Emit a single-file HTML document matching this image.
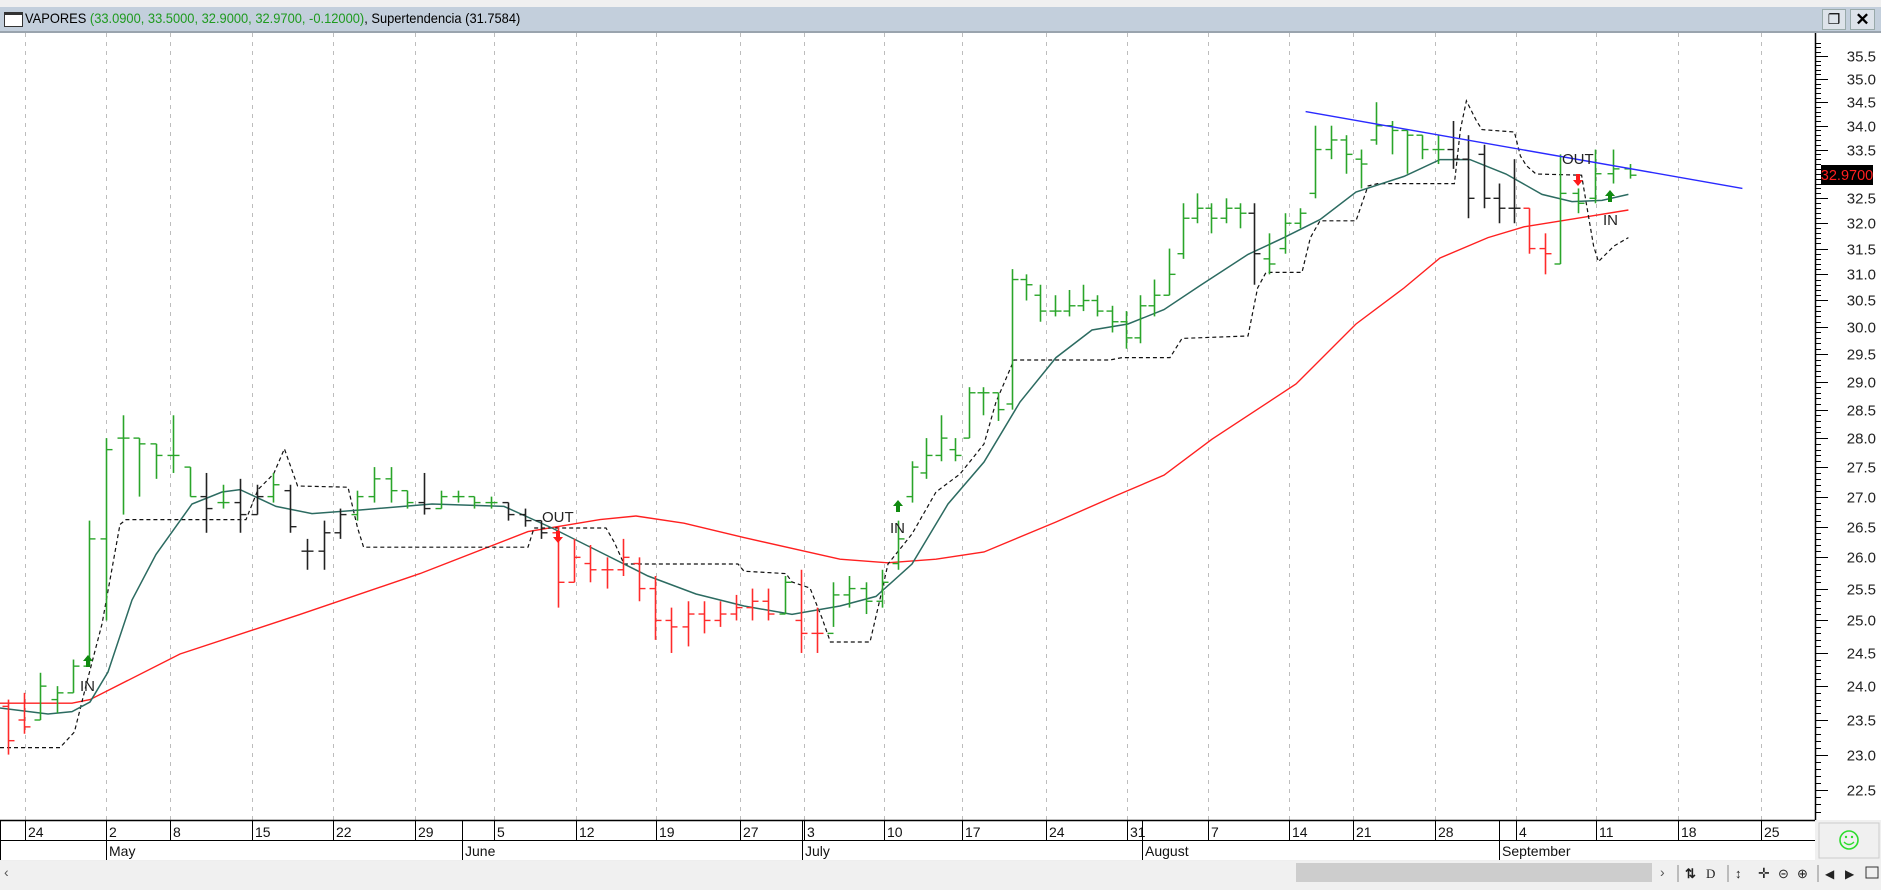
<!DOCTYPE html>
<html><head><meta charset="utf-8"><style>
body{margin:0;width:1881px;height:890px;overflow:hidden;background:#f0f0f0;font-family:"Liberation Sans",sans-serif;position:relative}
.abs{position:absolute}
</style></head><body>
<div class="abs" style="left:0;top:0;width:1881px;height:7px;background:#f0f0f0;border-bottom:1px solid #a0a0a0"></div>
<div class="abs" style="left:0;top:7px;width:1881px;height:26px;background:#c3cfdc;border-bottom:2px solid #9aa4ae;box-sizing:border-box"></div>
<div class="abs" style="left:4px;top:12px;width:19px;height:15px;border:1px solid #333;background:#fff;box-sizing:border-box;border-top:3px solid #333"></div>
<div class="abs" style="left:25px;top:10px;font-size:14px;white-space:nowrap;color:#000;transform:scaleX(0.92);transform-origin:left">VAPORES <span style="color:#1e9a1e">(33.0900, 33.5000, 32.9000, 32.9700, -0.12000)</span>, Supertendencia (31.7584)</div>
<div class="abs" style="left:1822px;top:9px;width:24px;height:21px;background:#dde3ea;border:1px solid #9aa;box-sizing:border-box;font-size:14px;text-align:center;line-height:19px">&#x2750;</div>
<div class="abs" style="left:1850px;top:9px;width:25px;height:21px;background:#dde3ea;border:1px solid #9aa;box-sizing:border-box;font-size:17px;font-weight:bold;text-align:center;line-height:19px">✕</div>
<svg class="abs" style="left:0;top:33px" width="1881" height="857" viewBox="0 33 1881 857" id="s"></svg>
<script>
const NS="http://www.w3.org/2000/svg";const s=document.getElementById('s');let h='';
function Y(p){return 790-1609*(Math.log(p)-3.1135);}
h+='<rect x="0" y="33" width="1881" height="787" fill="#fff"/>';
const ticks=[[25,'24'],[106,'2'],[170,'8'],[252,'15'],[333,'22'],[415,'29'],[494,'5'],[576,'12'],[656,'19'],[740,'27'],[804,'3'],[884,'10'],[962,'17'],[1046,'24'],[1127,'31'],[1208,'7'],[1289,'14'],[1353,'21'],[1435,'28'],[1516,'4'],[1596,'11'],[1678,'18'],[1761,'25']];
ticks.forEach(t=>{h+=`<line x1="${t[0]+.5}" y1="33" x2="${t[0]+.5}" y2="820" stroke="#bdbdbd" stroke-dasharray="4,5"/>`;});
// bars [hi,lo,open,close,c]
const D=[[23.8,23.0,23.7,23.2,'r'],[23.9,23.3,23.5,23.4,'r'],[24.2,23.5,23.5,24.0,'g'],[24.0,23.6,23.8,23.9,'g'],[24.4,23.9,23.9,24.3,'g'],[26.6,24.3,24.3,26.3,'g'],[28.0,25.0,26.3,27.8,'g'],[28.4,26.7,28.0,28.0,'g'],[28.0,27.0,28.0,27.9,'g'],[27.9,27.3,27.9,27.7,'g'],[28.4,27.4,27.7,27.7,'g'],[27.5,27.0,27.5,27.0,'g'],[27.4,26.4,27.0,26.8,'k'],[27.2,26.8,26.9,26.9,'g'],[27.3,26.4,26.9,26.7,'k'],[27.2,26.7,26.7,27.0,'k'],[27.4,26.9,27.0,27.2,'g'],[27.2,26.4,27.1,26.5,'k'],[26.3,25.8,26.1,26.1,'k'],[26.6,25.8,26.1,26.4,'k'],[26.8,26.3,26.4,26.7,'k'],[27.1,26.6,26.7,27.0,'g'],[27.5,26.9,27.0,27.3,'g'],[27.5,26.9,27.3,27.1,'g'],[27.1,26.8,27.1,26.9,'g'],[27.4,26.7,26.9,26.8,'k'],[27.1,26.8,26.8,27.0,'g'],[27.1,26.9,27.0,27.0,'g'],[27.0,26.8,27.0,26.9,'g'],[27.0,26.8,26.9,26.9,'g'],[26.9,26.6,26.9,26.7,'k'],[26.8,26.5,26.7,26.6,'k'],[26.6,26.3,26.6,26.4,'k'],[26.5,25.2,26.4,25.6,'r'],[26.3,25.6,25.6,26.0,'r'],[26.2,25.6,25.9,25.8,'r'],[26.0,25.5,25.8,25.8,'r'],[26.3,25.7,25.8,26.0,'r'],[26.0,25.3,25.9,25.5,'r'],[25.7,24.7,25.5,25.0,'r'],[25.2,24.5,25.0,24.9,'r'],[25.3,24.6,24.9,25.1,'r'],[25.3,24.8,25.1,25.0,'r'],[25.3,24.9,25.0,25.1,'r'],[25.4,25.0,25.1,25.2,'r'],[25.5,25.0,25.2,25.3,'r'],[25.5,25.0,25.3,25.1,'r'],[25.7,25.1,25.1,25.6,'g'],[25.8,24.5,25.0,24.8,'r'],[25.2,24.5,24.8,24.8,'r'],[25.6,24.9,24.8,25.4,'g'],[25.7,25.2,25.4,25.5,'g'],[25.6,25.1,25.5,25.3,'g'],[25.8,25.2,25.3,25.6,'g'],[26.6,25.8,25.9,26.3,'g'],[27.6,26.9,27.0,27.5,'g'],[28.0,27.3,27.4,27.7,'g'],[28.4,27.6,27.7,28.0,'g'],[28.0,27.6,27.8,27.7,'g'],[28.9,28.0,28.0,28.8,'g'],[28.9,28.4,28.8,28.8,'g'],[28.8,28.3,28.8,28.5,'g'],[31.1,28.5,28.6,30.9,'g'],[31.0,30.5,30.9,30.8,'g'],[30.8,30.1,30.6,30.3,'g'],[30.6,30.2,30.3,30.3,'g'],[30.7,30.2,30.3,30.4,'g'],[30.8,30.3,30.4,30.5,'g'],[30.6,30.2,30.5,30.3,'g'],[30.4,29.9,30.3,30.1,'g'],[30.3,29.6,30.1,29.8,'g'],[30.6,29.7,29.8,30.4,'g'],[30.9,30.2,30.4,30.6,'g'],[31.5,30.6,30.6,31.0,'g'],[32.4,31.3,31.4,32.1,'g'],[32.6,32.0,32.1,32.3,'g'],[32.4,31.8,32.3,32.1,'g'],[32.5,32.0,32.1,32.3,'g'],[32.4,31.9,32.3,32.2,'g'],[32.4,30.8,32.2,31.4,'k'],[31.8,31.0,31.3,31.2,'g'],[32.2,31.4,31.5,32.0,'g'],[32.3,31.9,32.0,32.2,'g'],[34.0,32.5,32.6,33.5,'g'],[34.0,33.3,33.5,33.7,'g'],[33.8,33.0,33.7,33.4,'g'],[33.5,32.7,33.3,33.2,'g'],[34.5,33.6,33.7,34.0,'g'],[34.1,33.4,34.0,33.9,'g'],[33.9,33.0,33.9,33.8,'g'],[33.8,33.3,33.8,33.5,'g'],[33.8,33.2,33.5,33.5,'g'],[34.1,33.1,33.5,33.3,'k'],[33.8,32.1,33.3,32.5,'k'],[33.6,32.3,33.4,32.5,'k'],[32.8,32.0,32.5,32.3,'k'],[33.3,32.0,32.3,32.3,'k'],[32.3,31.4,32.3,31.5,'r'],[31.8,31.0,31.5,31.4,'r'],[33.4,31.2,31.2,32.6,'g'],[32.7,32.2,32.6,32.4,'g'],[33.5,32.4,32.5,33.0,'g'],[33.5,32.8,33.0,33.1,'g'],[33.2,32.9,33.1,32.97,'g']];
const A=[[0,8],[5,89],[33,558],[54,898],[79,1254],[99,1560],[103,1630]];
function X(i){for(let k=0;k<A.length-1;k++){if(i<=A[k+1][0]){const[a,xa]=A[k],[b,xb]=A[k+1];return xa+(xb-xa)*(i-a)/(b-a);}}return 1630;}
const col={g:'#2aa52a',r:'#ff2b2b',k:'#222'};
// lines view coords scaled 1.2
function pl(pts,st,extra){return `<polyline fill="none" stroke="${st}" ${extra} points="${pts.map(p=>(p[0]*1.2)+','+(p[1]*1.2)).join(' ')}"/>`;}
const red=[[0,586],[60,586],[75,583],[150,545],[250,512],[350,478],[440,443],[500,433],[530,430],[570,436],[620,448],[700,466],[740,469],[780,466],[820,460],[880,435],[930,413],[970,396],[1010,366],[1080,320],[1130,270],[1170,240],[1200,215],[1240,198],[1270,189],[1320,181],[1357,175]];
const teal=[[0,590],[40,595],[60,593],[75,585],[90,560],[110,500],[130,462],[160,420],[185,410],[200,408],[230,422],[260,428],[300,425],[360,420],[420,422],[460,440],[500,460],[540,480],[580,495],[620,505],[660,512],[700,505],[730,497],[760,470],[790,420],[820,385],[850,335],[880,298],[910,275],[940,270],[970,258],[1000,238],[1040,212],[1070,198],[1100,183],[1130,160],[1170,147],[1200,133],[1225,133],[1255,145],[1285,162],[1310,168],[1335,167],[1357,162]];
const dash=[[0,623],[50,623],[62,610],[72,570],[85,520],[100,437],[105,433],[205,433],[215,408],[228,395],[237,374],[248,405],[290,406],[298,440],[303,456],[440,456],[445,440],[505,440],[512,452],[520,470],[615,470],[620,476],[655,478],[660,485],[675,490],[685,515],[692,535],[725,535],[732,505],[740,470],[760,445],[780,410],[800,395],[820,370],[830,335],[845,300],[925,300],[935,298],[975,298],[985,282],[1040,280],[1048,240],[1055,227],[1085,227],[1092,198],[1100,184],[1130,184],[1140,155],[1148,153],[1212,153],[1217,108],[1222,84],[1230,100],[1235,108],[1262,110],[1267,130],[1272,138],[1280,145],[1318,146],[1322,170],[1328,205],[1332,218],[1345,205],[1357,198]];
h+=pl(red,'#ff2020','stroke-width="1.4"');
h+=pl(dash,'#111','stroke-width="1.2" stroke-dasharray="4,3"');
h+=pl(teal,'#2c6b61','stroke-width="1.5"');
D.forEach((d,i)=>{const x=Math.round(X(i))+.5,c=col[d[4]];h+=`<line x1="${x}" y1="${Y(d[0])}" x2="${x}" y2="${Y(d[1])}" stroke="${c}" stroke-width="1.6"/><line x1="${x-6}" y1="${Y(d[2])}" x2="${x}" y2="${Y(d[2])}" stroke="${c}" stroke-width="1.4"/><line x1="${x}" y1="${Y(d[3])}" x2="${x+6}" y2="${Y(d[3])}" stroke="${c}" stroke-width="1.4"/>`;});
h+=`<line x1="${1088*1.2}" y1="${93*1.2}" x2="${1452*1.2}" y2="${157*1.2}" stroke="#2a2aff" stroke-width="1.4"/>`;
function up(x,y){return `<path d="M${x} ${y} l-5 6 h3 v6 h4 v-6 h3z" fill="#108a10"/>`;}
function dn(x,y){return `<path d="M${x} ${y} l-5 -6 h3 v-6 h4 v6 h3z" fill="#ff1a1a"/>`;}
h+=up(88,655)+`<text x="80" y="691" font-size="15" fill="#222">IN</text>`;
h+=up(898,500)+`<text x="890" y="533" font-size="15" fill="#222">IN</text>`;
h+=up(1610,190)+`<text x="1603" y="225" font-size="15" fill="#222">IN</text>`;
h+=dn(558,543)+`<text x="542" y="522" font-size="15" fill="#222">OUT</text>`;
h+=dn(1578,186)+`<text x="1562" y="164" font-size="15" fill="#222">OUT</text>`;
// right axis
h+='<rect x="1815" y="33" width="66" height="787" fill="#fff"/><line x1="1815.5" y1="33" x2="1815.5" y2="820" stroke="#000" stroke-width="1.5"/>';
for(let p=22.2;p<=35.9;p+=0.1){const y=Math.round(Y(p))+.5;const maj=Math.abs(p*2-Math.round(p*2))<0.01;h+=`<line x1="1815" y1="${y}" x2="${maj?1828:1821}" y2="${y}" stroke="#000"/>`;if(maj&&Math.abs(p-33)>0.01)h+=`<text x="1876" y="${y+5}" font-size="15" text-anchor="end" fill="#222">${p.toFixed(1)}</text>`;}
h+=`<rect x="1821" y="165" width="52" height="20" fill="#000"/><text x="1847" y="180" font-size="14.5" text-anchor="middle" fill="#ff2020">32.9700</text>`;
// date axis
h+='<rect x="0" y="820" width="1815" height="41" fill="#fff"/><line x1="0" y1="820.5" x2="1815" y2="820.5" stroke="#000" stroke-width="1.5"/><line x1="0" y1="840.5" x2="1815" y2="840.5" stroke="#000"/><line x1="0" y1="861" x2="1815" y2="861" stroke="#ddd"/>';
ticks.forEach(t=>{h+=`<line x1="${t[0]+.5}" y1="820" x2="${t[0]+.5}" y2="840" stroke="#000"/><text x="${t[0]+3}" y="837" font-size="14" fill="#111">${t[1]}</text>`;});
[[106,'May'],[462,'June'],[802,'July'],[1142,'August'],[1499,'September']].forEach(m=>{h+=`<line x1="${m[0]+.5}" y1="${m[0]==106?840:820}" x2="${m[0]+.5}" y2="860" stroke="#000"/><text x="${m[0]+3}" y="856" font-size="14" fill="#111">${m[1]}</text>`;});
h+='<line x1="0.5" y1="820" x2="0.5" y2="860" stroke="#000"/>';
h+='<rect x="1819" y="823" width="60" height="35" fill="#f0f0f0" stroke="#ccc"/><circle cx="1849" cy="840" r="9" fill="none" stroke="#2ddc2d" stroke-width="1.6"/><circle cx="1846" cy="837" r="1.2" fill="#2ddc2d"/><circle cx="1852" cy="837" r="1.2" fill="#2ddc2d"/><path d="M1844 842 q5 5 10 0" fill="none" stroke="#2ddc2d" stroke-width="1.4"/>';
// scroll bar
h+='<rect x="0" y="861" width="1881" height="29" fill="#f0f0f0"/><text x="4" y="877" font-size="14" fill="#555">&#x2039;</text><rect x="1296" y="863" width="356" height="19" fill="#cdcdcd"/>';
h+='<text x="1660" y="877" font-size="14" fill="#555">&#x203A;</text><line x1="1678" y1="865" x2="1678" y2="882" stroke="#888"/><text x="1685" y="878" font-size="13" fill="#222" font-weight="bold">&#x21C5;</text><text x="1706" y="878" font-size="13" fill="#222" font-family="Liberation Serif">D</text><line x1="1728" y1="865" x2="1728" y2="882" stroke="#888"/><text x="1735" y="878" font-size="13" fill="#222">&#x2195;</text><text x="1758" y="878" font-size="14" fill="#222">&#x271B;</text><text x="1778" y="878" font-size="13" fill="#222">&#x229D;</text><text x="1797" y="878" font-size="13" fill="#222">&#x2295;</text><line x1="1818" y1="865" x2="1818" y2="882" stroke="#888"/><text x="1825" y="878" font-size="12" fill="#222">&#x25C0;</text><text x="1845" y="878" font-size="12" fill="#222">&#x25B6;</text><rect x="1866" y="867" width="12" height="11" fill="none" stroke="#333"/>';
s.innerHTML=h;
</script>
</body></html>
